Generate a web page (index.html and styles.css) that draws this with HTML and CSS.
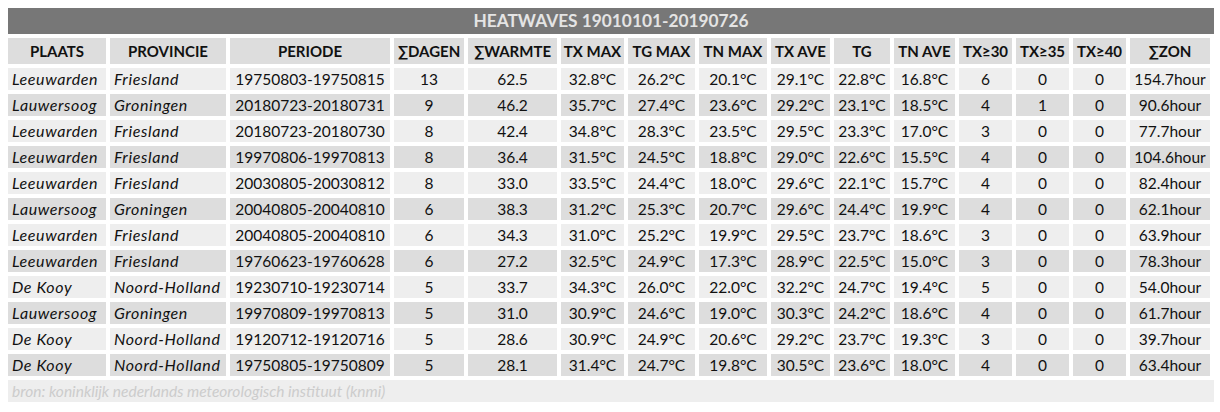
FILE: index.html
```html
<!DOCTYPE html>
<html lang="nl">
<head>
<meta charset="utf-8">
<title>Heatwaves</title>
<link rel="stylesheet" href="styles.css">
</head>
<body>
<div class="wrap">
  <div class="title">HEATWAVES 19010101-20190726</div>
  <table class="hw">
    <colgroup>
      <col class="c-plaats"><col class="c-prov"><col class="c-per"><col class="c-dag"><col class="c-warm">
      <col class="c-txmax"><col class="c-tgmax"><col class="c-tnmax"><col class="c-txave"><col class="c-tg">
      <col class="c-tnave"><col class="c-cnt"><col class="c-cnt"><col class="c-cnt"><col class="c-zon">
    </colgroup>
    <thead>
      <tr>
        <th>PLAATS</th><th>PROVINCIE</th><th>PERIODE</th><th>∑DAGEN</th><th>∑WARMTE</th>
        <th>TX MAX</th><th>TG MAX</th><th>TN MAX</th><th>TX AVE</th><th>TG</th>
        <th>TN AVE</th><th>TX≥30</th><th>TX≥35</th><th>TX≥40</th><th>∑ZON</th>
      </tr>
    </thead>
    <tbody>
      <tr><td class="loc">Leeuwarden</td><td class="loc">Friesland</td><td class="per">19750803-19750815</td><td>13</td><td>62.5</td><td>32.8°C</td><td>26.2°C</td><td>20.1°C</td><td>29.1°C</td><td>22.8°C</td><td>16.8°C</td><td>6</td><td>0</td><td>0</td><td>154.7hour</td></tr>
      <tr><td class="loc">Lauwersoog</td><td class="loc">Groningen</td><td class="per">20180723-20180731</td><td>9</td><td>46.2</td><td>35.7°C</td><td>27.4°C</td><td>23.6°C</td><td>29.2°C</td><td>23.1°C</td><td>18.5°C</td><td>4</td><td>1</td><td>0</td><td>90.6hour</td></tr>
      <tr><td class="loc">Leeuwarden</td><td class="loc">Friesland</td><td class="per">20180723-20180730</td><td>8</td><td>42.4</td><td>34.8°C</td><td>28.3°C</td><td>23.5°C</td><td>29.5°C</td><td>23.3°C</td><td>17.0°C</td><td>3</td><td>0</td><td>0</td><td>77.7hour</td></tr>
      <tr><td class="loc">Leeuwarden</td><td class="loc">Friesland</td><td class="per">19970806-19970813</td><td>8</td><td>36.4</td><td>31.5°C</td><td>24.5°C</td><td>18.8°C</td><td>29.0°C</td><td>22.6°C</td><td>15.5°C</td><td>4</td><td>0</td><td>0</td><td>104.6hour</td></tr>
      <tr><td class="loc">Leeuwarden</td><td class="loc">Friesland</td><td class="per">20030805-20030812</td><td>8</td><td>33.0</td><td>33.5°C</td><td>24.4°C</td><td>18.0°C</td><td>29.6°C</td><td>22.1°C</td><td>15.7°C</td><td>4</td><td>0</td><td>0</td><td>82.4hour</td></tr>
      <tr><td class="loc">Lauwersoog</td><td class="loc">Groningen</td><td class="per">20040805-20040810</td><td>6</td><td>38.3</td><td>31.2°C</td><td>25.3°C</td><td>20.7°C</td><td>29.6°C</td><td>24.4°C</td><td>19.9°C</td><td>4</td><td>0</td><td>0</td><td>62.1hour</td></tr>
      <tr><td class="loc">Leeuwarden</td><td class="loc">Friesland</td><td class="per">20040805-20040810</td><td>6</td><td>34.3</td><td>31.0°C</td><td>25.2°C</td><td>19.9°C</td><td>29.5°C</td><td>23.7°C</td><td>18.6°C</td><td>3</td><td>0</td><td>0</td><td>63.9hour</td></tr>
      <tr><td class="loc">Leeuwarden</td><td class="loc">Friesland</td><td class="per">19760623-19760628</td><td>6</td><td>27.2</td><td>32.5°C</td><td>24.9°C</td><td>17.3°C</td><td>28.9°C</td><td>22.5°C</td><td>15.0°C</td><td>3</td><td>0</td><td>0</td><td>78.3hour</td></tr>
      <tr><td class="loc">De Kooy</td><td class="loc">Noord-Holland</td><td class="per">19230710-19230714</td><td>5</td><td>33.7</td><td>34.3°C</td><td>26.0°C</td><td>22.0°C</td><td>32.2°C</td><td>24.7°C</td><td>19.4°C</td><td>5</td><td>0</td><td>0</td><td>54.0hour</td></tr>
      <tr><td class="loc">Lauwersoog</td><td class="loc">Groningen</td><td class="per">19970809-19970813</td><td>5</td><td>31.0</td><td>30.9°C</td><td>24.6°C</td><td>19.0°C</td><td>30.3°C</td><td>24.2°C</td><td>18.6°C</td><td>4</td><td>0</td><td>0</td><td>61.7hour</td></tr>
      <tr><td class="loc">De Kooy</td><td class="loc">Noord-Holland</td><td class="per">19120712-19120716</td><td>5</td><td>28.6</td><td>30.9°C</td><td>24.9°C</td><td>20.6°C</td><td>29.2°C</td><td>23.7°C</td><td>19.3°C</td><td>3</td><td>0</td><td>0</td><td>39.7hour</td></tr>
      <tr><td class="loc">De Kooy</td><td class="loc">Noord-Holland</td><td class="per">19750805-19750809</td><td>5</td><td>28.1</td><td>31.4°C</td><td>24.7°C</td><td>19.8°C</td><td>30.5°C</td><td>23.6°C</td><td>18.0°C</td><td>4</td><td>0</td><td>0</td><td>63.4hour</td></tr>
    </tbody>
  </table>
  <div class="source">bron: koninklijk nederlands meteorologisch instituut (knmi)</div>
</div>
</body>
</html>
```

FILE: styles.css
```css
html, body {
  margin: 0;
  padding: 0;
  background: #ffffff;
}

body {
  padding: 8px 0 0 8px;
  font-family: Lato, "Open Sans", "Liberation Sans", sans-serif;
  font-size: 15.5px;
  color: #111111;
}

.wrap {
  width: 1206px;
}

.title {
  height: 26px;
  line-height: 26px;
  background: #777777;
  color: #e4e4e4;
  font-weight: bold;
  font-size: 17.3px;
  text-align: center;
}

.hw {
  width: 1210px;
  margin-left: -4px;
  border-collapse: separate;
  border-spacing: 4px;
  table-layout: fixed;
}

.c-plaats { width: 98px; }
.c-prov { width: 116px; }
.c-per { width: 160px; }
.c-dag { width: 70px; }
.c-warm { width: 89px; }
.c-txmax { width: 63px; }
.c-tgmax { width: 67px; }
.c-tnmax { width: 68px; }
.c-txave { width: 59px; }
.c-tg { width: 56px; }
.c-tnave { width: 61px; }
.c-cnt { width: 53px; }
.c-zon { width: 80px; }

.hw th {
  height: 26px;
  padding: 0;
  background: #dddddd;
  font-weight: bold;
  font-size: 15px;
  color: #111111;
  text-align: center;
  white-space: nowrap;
  line-height: 26px;
}

.hw td {
  height: 22px;
  padding: 0;
  line-height: 22px;
  text-align: center;
  white-space: nowrap;
}

.hw tbody tr:nth-child(odd) td {
  background: #eeeeee;
}

.hw tbody tr:nth-child(even) td {
  background: #dddddd;
}

.hw td.loc {
  text-align: left;
  font-style: italic;
  font-size: 16px;
  letter-spacing: 0.6px;
  padding-left: 4px;
}

.hw td.per {
  text-align: center;
}

.source {
  height: 22px;
  line-height: 22px;
  padding-left: 4px;
  background: #eeeeee;
  color: #cccccc;
  font-style: italic;
  font-size: 15.5px;
}
```
